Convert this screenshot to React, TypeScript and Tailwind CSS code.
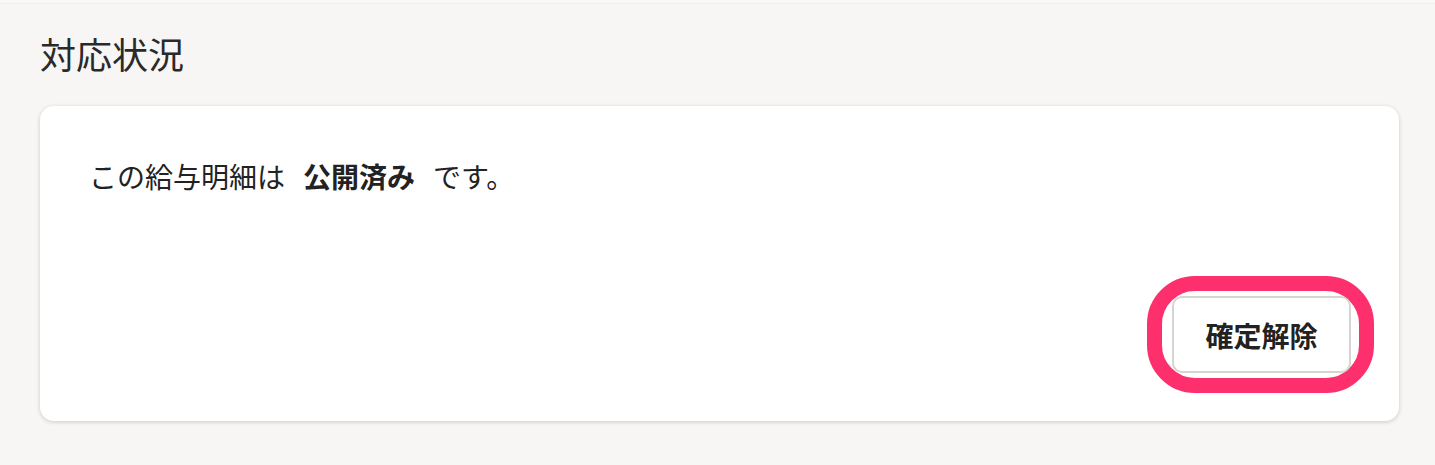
export default function App() {
  return (
    <div
      className="min-h-[465px] w-full bg-[#f7f6f4] text-[#222]"
      style={{ fontFamily: '"Noto Sans CJK JP", "Noto Sans", sans-serif' }}
    >
      <div className="h-[3px] bg-[#f9f8f7] shadow-[0_1px_1px_rgba(0,0,0,0.03)]" />
      <div className="pl-10 pr-9 pt-[23px]">
        <h2 className="text-[36px] leading-[54px] font-normal text-[#2a2a2a]">対応状況</h2>
        <div className="mt-[26px] flex flex-col rounded-[14px] bg-white pl-[49px] pr-[48px] pt-[49px] pb-12 shadow-[0_1px_4px_rgba(0,0,0,0.18)]">
          <p className="text-[28px] leading-[42px]">
            この給与明細は
            <span className="mx-[18px] font-bold">公開済み</span>
            です。
          </p>
          <div className="mt-[99px] flex justify-end">
            <div className="relative">
              <div className="pointer-events-none absolute -left-[25px] -right-[23px] -inset-y-[20px] rounded-[48px] border-[15px] border-[#fe2f6d]" />
              <button className="relative flex h-[77px] w-[179px] items-center justify-center rounded-[10px] border-2 border-[#d6d4ce] bg-white text-[28px] font-bold text-[#222]">
                確定解除
              </button>
            </div>
          </div>
        </div>
      </div>
    </div>
  );
}
